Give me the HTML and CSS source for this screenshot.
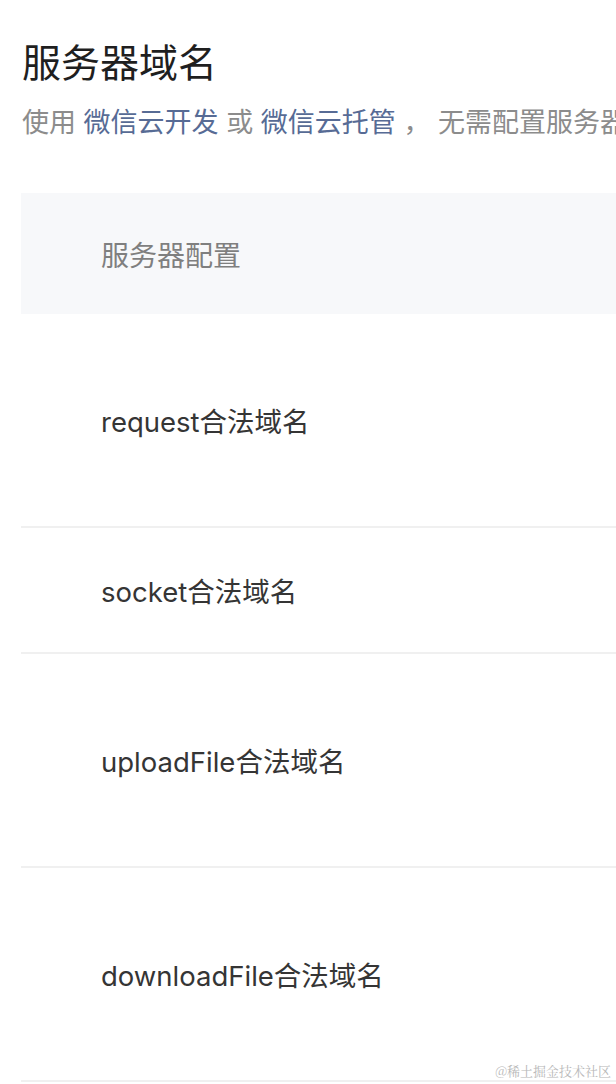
FILE: index.html
```html
<!DOCTYPE html>
<html lang="zh-CN">
<head>
    <meta charset="UTF-8">
    <meta name="viewport" content="width=device-width, initial-scale=1.0">
    <title>服务器域名</title>
    <link rel="stylesheet" href="styles.css">
</head>
<body>

<div class="page">
    <h1 class="title">服务器域名</h1>
    <p class="desc">使用 <a href="#">微信云开发</a> 或 <a href="#">微信云托管</a> ， 无需配置服务器域名</p>

    <div class="table">
        <div class="table-head">服务器配置</div>
        <div class="row row-tall">request合法域名</div>
        <div class="row row-short">socket合法域名</div>
        <div class="row row-tall">uploadFile合法域名</div>
        <div class="row row-tall">downloadFile合法域名</div>
    </div>
</div>

<div class="watermark">@稀土掘金技术社区</div>

</body>
</html>
```

FILE: styles.css
```css
body {
    margin: 0;
    background-color: #fff;
    font-family: Inter, "Noto Sans CJK SC", sans-serif;
    overflow: hidden;
    height: 1084px;
    position: relative;
}

.page {
    padding-left: 22px;
}

.title {
    margin: 36px 0 0;
    font-size: 39px;
    font-weight: 400;
    line-height: 53px;
    color: #1f1f1f;
    white-space: nowrap;
}

.desc {
    margin: 14px 0 0;
    font-size: 27px;
    line-height: 40px;
    color: #8c8c8c;
    white-space: nowrap;
}

.desc a {
    color: #576b95;
    text-decoration: none;
}

.table {
    margin-top: 50px;
    margin-left: -1px;
    width: 1200px;
}

.table-head {
    height: 121px;
    display: flex;
    align-items: center;
    padding-left: 80px;
    background-color: #f7f8fa;
    font-size: 28px;
    color: #7f7f7f;
}

.row {
    display: flex;
    align-items: center;
    padding-left: 80px;
    font-size: 27.5px;
    color: #353535;
    border-bottom: 2px solid #f0f0f0;
}

.row-tall {
    height: 212px;
}

.row-short {
    height: 124px;
}

.watermark {
    position: absolute;
    right: 5px;
    bottom: 4px;
    font-family: "Noto Serif CJK SC", "Liberation Serif", serif;
    font-size: 13px;
    color: #b8b8b8;
}
```
